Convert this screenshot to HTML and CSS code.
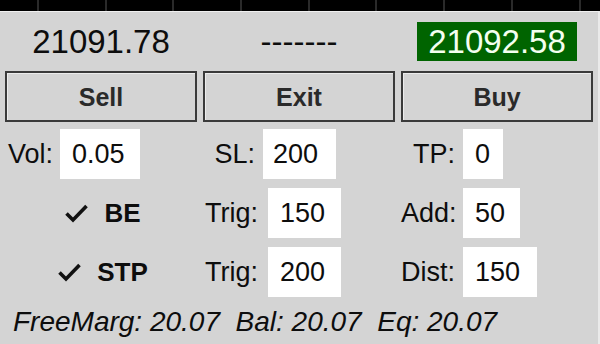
FILE: index.html
```html
<!DOCTYPE html>
<html>
<head>
<meta charset="utf-8">
<link rel="stylesheet" href="styles.css">
</head>
<body>
<div class="chart-strip"></div>
<div class="panel">
  <div class="cols price-row">
    <div class="price">21091.78</div>
    <div class="price">-------</div>
    <div class="price"><span class="ask">21092.58</span></div>
  </div>
  <div class="cols btn-row">
    <div class="btn">Sell</div>
    <div class="btn">Exit</div>
    <div class="btn">Buy</div>
  </div>
  <div class="cols field-row">
    <div class="cell cell-left">
      <span class="lbl">Vol:</span><span class="inp w80">0.05</span>
    </div>
    <div class="cell">
      <span class="lbl lbl-mid">SL:</span><span class="inp w73 pad10">200</span>
    </div>
    <div class="cell">
      <span class="lbl lbl-right">TP:</span><span class="inp w40">0</span>
    </div>
  </div>
  <div class="cols field-row">
    <div class="cell cell-check">
      <svg class="check" width="23" height="19" viewBox="0 0 23 19"><path d="M1.5 9.5 L8 16 L21.5 2" fill="none" stroke="#111" stroke-width="3.6"/></svg>
      <span class="chk-lbl">BE</span>
    </div>
    <div class="cell">
      <span class="lbl lbl-trig">Trig:</span><span class="inp w73">150</span>
    </div>
    <div class="cell">
      <span class="lbl lbl-right">Add:</span><span class="inp w57">50</span>
    </div>
  </div>
  <div class="cols field-row">
    <div class="cell cell-check">
      <svg class="check" width="23" height="19" viewBox="0 0 23 19"><path d="M1.5 9.5 L8 16 L21.5 2" fill="none" stroke="#111" stroke-width="3.6"/></svg>
      <span class="chk-lbl">STP</span>
    </div>
    <div class="cell">
      <span class="lbl lbl-trig">Trig:</span><span class="inp w73">200</span>
    </div>
    <div class="cell">
      <span class="lbl lbl-right">Dist:</span><span class="inp w74">150</span>
    </div>
  </div>
  <div class="footer">FreeMarg: 20.07&nbsp; Bal: 20.07&nbsp; Eq: 20.07</div>
</div>
</body>
</html>
```
FILE: styles.css
```css
html, body {
  margin: 0;
  padding: 0;
}
body {
  width: 600px;
  height: 344px;
  overflow: hidden;
  background: #000;
  font-family: "Liberation Sans", Arial, sans-serif;
  color: #0d0d0d;
}
.chart-strip {
  height: 11px;
  background-color: #000;
  background-image: repeating-linear-gradient(to right, transparent 0, transparent 37px, #2a2a2a 37px, #2a2a2a 39px, transparent 39px, transparent 67.7px);
}
.panel {
  width: 593px;
  height: 332px;
  background: #d4d4d4;
  border-top: 1px solid #f0f0f0;
  border-right: 2px solid #eaeaea;
  padding: 10px 0 0 5px;
  box-sizing: content-box;
  overflow: hidden;
}
.cols {
  display: grid;
  grid-template-columns: 192px 192px 192px;
  column-gap: 6px;
}
.price-row {
  height: 39px;
  margin-bottom: 10px;
  align-items: center;
}
.price {
  text-align: center;
  font-size: 33px;
  line-height: 39px;
}
.ask {
  display: inline-block;
  width: 160px;
  height: 39px;
  background: #006400;
  color: #f4fff0;
}
.btn-row {
  height: 51px;
  margin-bottom: 7px;
}
.btn {
  border: 2px solid #3a3a3a;
  box-shadow: inset 1px 1px 0 #ececec;
  display: flex;
  align-items: center;
  justify-content: center;
  font-weight: bold;
  font-size: 25px;
  color: #2a2a2a;
  padding-top: 2px;
  box-sizing: border-box;
}
.field-row {
  height: 50px;
  margin-bottom: 9px;
}
.cell {
  display: flex;
  align-items: center;
  font-size: 27px;
}
.cell-left {
  padding-left: 3px;
  gap: 7px;
}
.cell-check {
  justify-content: center;
  gap: 16px;
  padding-left: 4px;
}
.check {
  display: block;
}
.chk-lbl {
  font-weight: bold;
  font-size: 26px;
}
.lbl {
  text-align: right;
  flex: none;
}
.lbl-mid {
  width: 52px;
  margin-right: 8px;
}
.lbl-trig {
  width: 55px;
  margin-right: 10px;
}
.lbl-right {
  width: 54px;
  margin-right: 8px;
}
.inp {
  background: #fff;
  height: 50px;
  line-height: 50px;
  box-sizing: border-box;
  padding-left: 12px;
  flex: none;
}
.pad10 {
  padding-left: 10px;
}
.w80 { width: 80px; }
.w73 { width: 73px; }
.w40 { width: 40px; }
.w57 { width: 57px; }
.w74 { width: 74px; }
.footer {
  margin-top: -2px;
  padding-left: 8px;
  font-style: italic;
  font-size: 28px;
  line-height: 36px;
  white-space: nowrap;
}
```
